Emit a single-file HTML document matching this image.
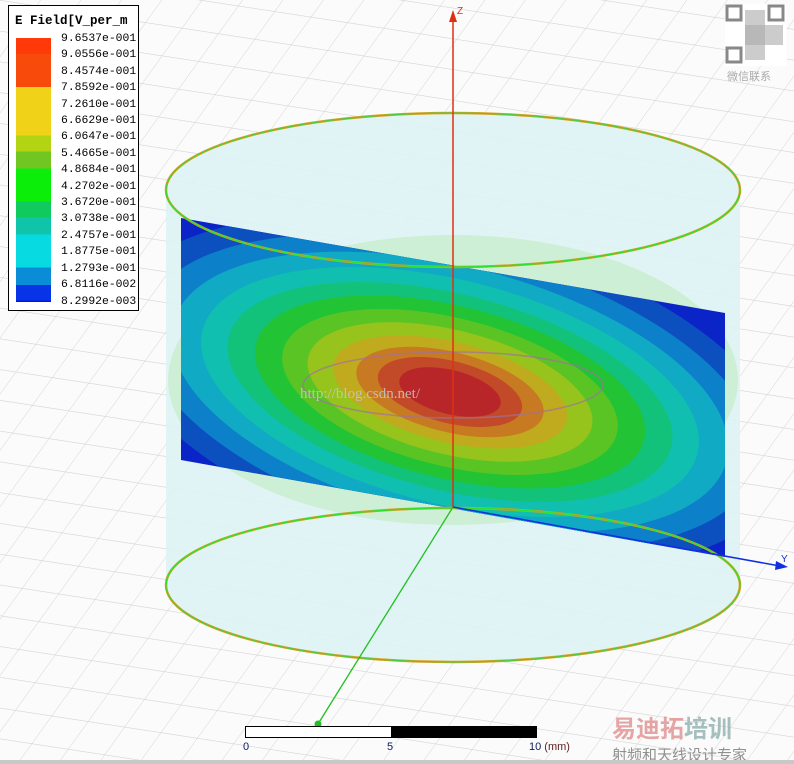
<!DOCTYPE html>
<html><head><style>
body{margin:0;width:794px;height:764px;overflow:hidden;background:#fbfbfb;font-family:"Liberation Mono",monospace}
</style></head><body>
<svg width="794" height="764" style="position:absolute;left:0;top:0">
<defs>
<clipPath id="pl"><polygon points="181,218 725,313 725,557 181,460"/></clipPath>
<pattern id="g" width="40" height="28" patternUnits="userSpaceOnUse" patternTransform="skewX(-30) rotate(8)">
<path d="M0 0H40M0 0V28" stroke="#d0d0d0" stroke-width="1" fill="none"/></pattern>
</defs>
<rect width="794" height="764" fill="url(#g)"/>
<path d="M166 190 A287 77 0 0 1 740 190 L740 585 A287 77 0 0 1 166 585 Z" fill="#def3f4" opacity="0.9"/>
<ellipse cx="453" cy="380" rx="285" ry="145" fill="#c4ecc8" opacity="0.7"/>
<g clip-path="url(#pl)">
<rect x="150" y="200" width="600" height="380" fill="#0a24c8"/>
<g transform="translate(450,392) rotate(14)">
<ellipse rx="345" ry="160" fill="#0c50c0"/>
<ellipse rx="315" ry="142" fill="#0c80c8"/>
<ellipse rx="285" ry="126" fill="#10aac4"/>
<ellipse rx="255" ry="112" fill="#10bfb0"/>
<ellipse rx="228" ry="98" fill="#12c27a"/>
<ellipse rx="200" ry="86" fill="#22c334"/>
<ellipse rx="172" ry="74" fill="#5ac424"/>
<ellipse rx="146" ry="62" fill="#96c41c"/>
<ellipse rx="120" ry="50" fill="#c0aa1e"/>
<ellipse rx="96" ry="40" fill="#c87a22"/>
<ellipse rx="74" ry="31" fill="#c24a28"/>
<ellipse rx="52" ry="22" fill="#b8262a"/>
</g>
</g>
<ellipse cx="453" cy="190" rx="287" ry="77" fill="none" stroke="#d8a020" stroke-width="2.5"/>
<ellipse cx="453" cy="190" rx="287" ry="77" fill="none" stroke="#40d040" stroke-width="1"/>
<ellipse cx="453" cy="585" rx="287" ry="77" fill="none" stroke="#d8a020" stroke-width="2.5"/>
<ellipse cx="453" cy="585" rx="287" ry="77" fill="none" stroke="#40d040" stroke-width="1"/>
<path d="M166 190 A287 77 0 0 0 740 190" fill="none" stroke="#30e030" stroke-width="1.3"/>
<path d="M166 585 A287 77 0 0 1 740 585" fill="none" stroke="#30e030" stroke-width="1.3"/>
<ellipse cx="453" cy="385" rx="150" ry="33" fill="none" stroke="#a070a0" stroke-width="1.5" opacity="0.7"/>
<line x1="453" y1="18" x2="453" y2="507" stroke="#e03010" stroke-width="1.5"/>
<polygon points="453,10 449,22 457,22" fill="#e03010"/>
<text x="457" y="14" font-size="10" fill="#e03010" font-family="Liberation Sans">Z</text>
<line x1="453" y1="507" x2="780" y2="566" stroke="#1030e0" stroke-width="1.5"/>
<polygon points="788,567 776,561 775,570" fill="#1030e0"/>
<text x="781" y="562" font-size="10" fill="#1030e0" font-family="Liberation Sans">Y</text>
<line x1="453" y1="507" x2="318" y2="724" stroke="#20c020" stroke-width="1.3"/>
<circle cx="318" cy="724" r="3.5" fill="#20c020"/>
<text x="300" y="398" font-size="15" fill="#c8c8c8" font-family="Liberation Serif" opacity="0.85">http://blog.csdn.net/</text>
<rect x="245.5" y="726.5" width="291" height="11" fill="#000" stroke="#000"/>
<rect x="246" y="727" width="145" height="10" fill="#fff"/>
<g font-family="Liberation Sans" font-size="11" fill="#102060">
<text x="243" y="750">0</text><text x="387" y="750">5</text><text x="529" y="750">10 <tspan fill="#602020">(mm)</tspan></text></g>
<text x="612" y="737" font-size="24" font-weight="bold" fill="#e09090" opacity="0.8" font-family="'Noto Sans CJK SC',sans-serif">易迪拓<tspan fill="#90b0b0">培训</tspan></text>
<text x="612" y="760" font-size="15" fill="#909090" font-family="'Noto Sans CJK SC',sans-serif">射频和天线设计专家</text>
<rect x="0" y="760" width="794" height="4" fill="#c8c8c8"/>
<rect x="725" y="4" width="62" height="62" fill="#fff"/>
<rect x="727" y="6" width="14" height="14" fill="none" stroke="#888" stroke-width="3"/>
<rect x="769" y="6" width="14" height="14" fill="none" stroke="#888" stroke-width="3"/>
<rect x="727" y="48" width="14" height="14" fill="none" stroke="#888" stroke-width="3"/>
<rect x="745" y="10" width="20" height="50" fill="#aaa" opacity="0.6"/>
<rect x="745" y="25" width="38" height="20" fill="#aaa" opacity="0.6"/>
<text x="727" y="80" font-size="11" fill="#aaa" font-family="'Noto Sans CJK SC',sans-serif">微信联系</text>
</svg>
<div style="position:absolute;left:8px;top:5px;width:131px;height:306px;border:1px solid #000;background:#fff;box-sizing:border-box">
<div style="position:absolute;left:6px;top:8px;font-size:12.5px;font-weight:bold;white-space:nowrap">E Field[V_per_m</div>
<div style="position:absolute;left:7px;top:32px;width:35px;height:264px;background:linear-gradient(#ff3a08 0 6%,#f84a0a 6% 18.5%,#f0d218 18.5% 37%,#b2d412 37% 43%,#72c622 43% 49.5%,#0aee0a 49.5% 62%,#10ca5e 62% 68%,#10c4aa 68% 74.5%,#08dae2 74.5% 87%,#0b8cd6 87% 93.5%,#0634e6 93.5% 99.5%,#0614e6 99.5%)"></div>
<div style="position:absolute;left:52px;top:25px;font-size:11.4px;line-height:16.4px;white-space:pre">9.6537e-001
9.0556e-001
8.4574e-001
7.8592e-001
7.2610e-001
6.6629e-001
6.0647e-001
5.4665e-001
4.8684e-001
4.2702e-001
3.6720e-001
3.0738e-001
2.4757e-001
1.8775e-001
1.2793e-001
6.8116e-002
8.2992e-003</div>
</div>
</body></html>
